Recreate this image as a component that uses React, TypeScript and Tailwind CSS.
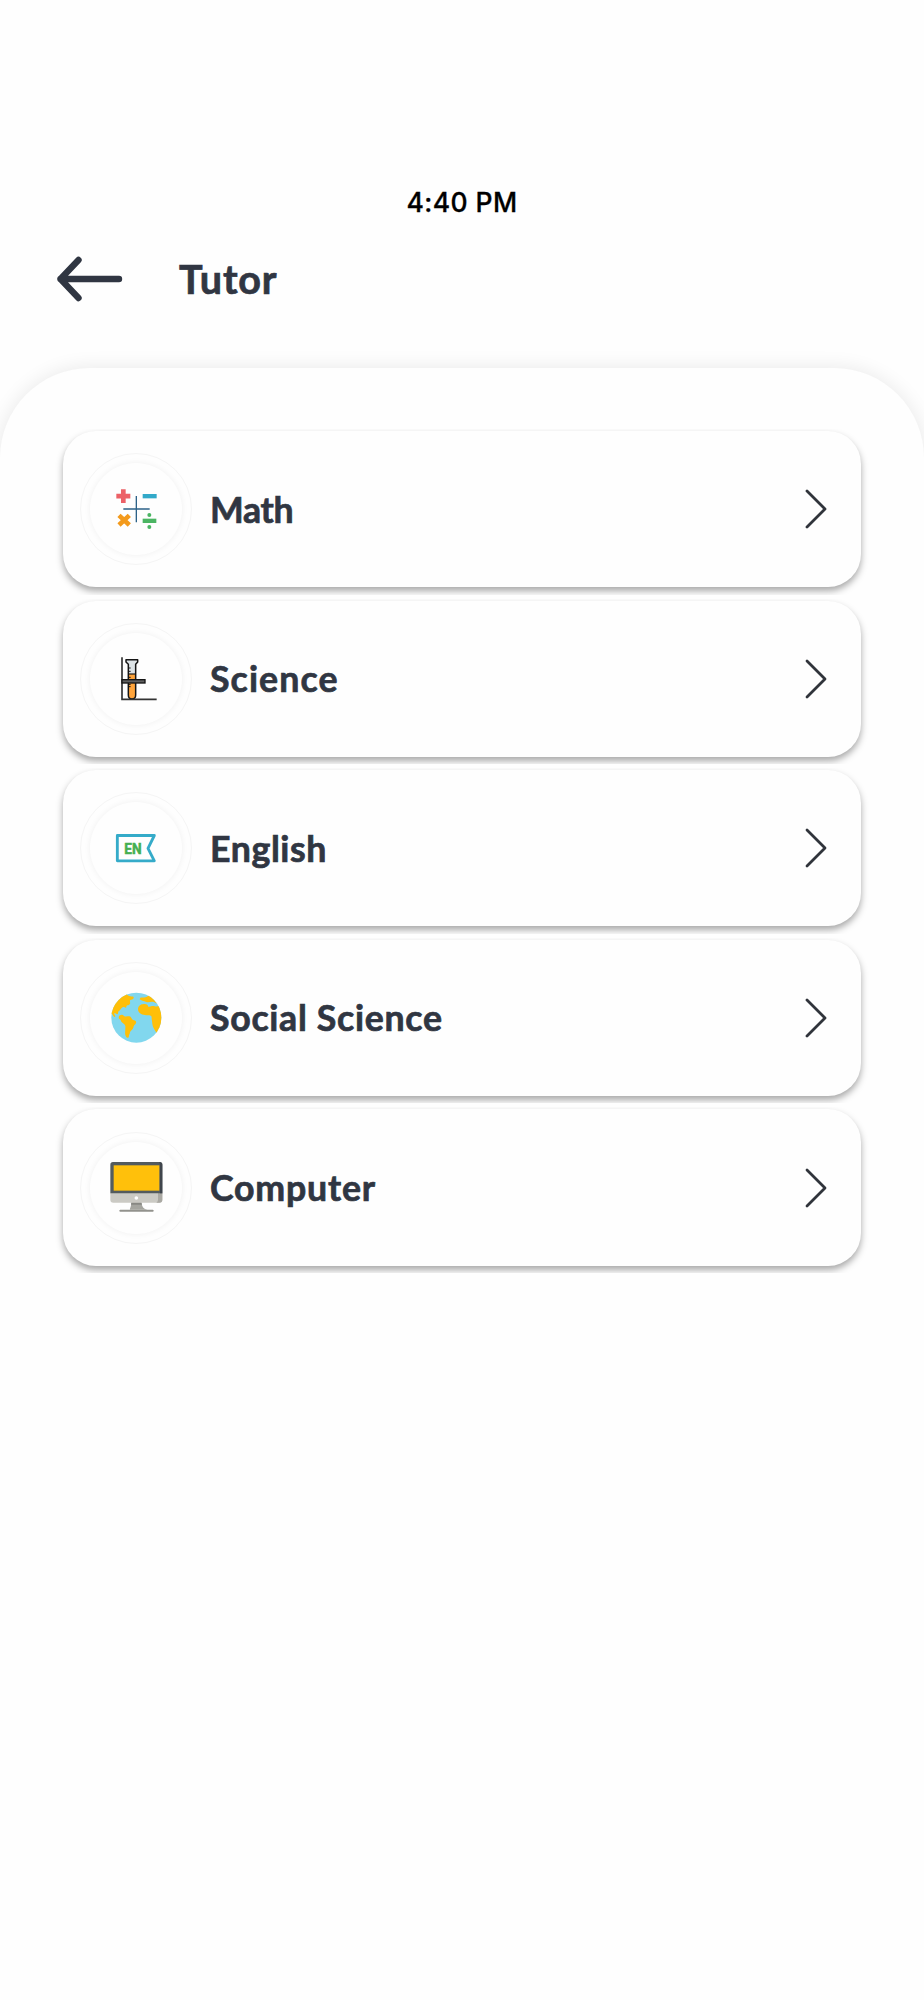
import React from 'react';

const MathIcon = () => (
  <svg viewBox="78 87 180 180" className="w-[60px] h-[60px]">
    <path d="M130 118v41M109 138.500h42" stroke="#ec6167" strokeWidth="14" />
    <path d="M188 138.500h42" stroke="#32a9c9" strokeWidth="13" />
    <path d="M169 138v79M130 177h79" stroke="#2d6288" strokeWidth="4" />
    <path d="M117 196l31 29M148 196l-31 29" stroke="#f39a1c" strokeWidth="14" />
    <path d="M188 212.500h41" stroke="#4bb563" strokeWidth="13" />
    <circle cx="208" cy="195" r="6" fill="#4bb563" />
    <circle cx="208" cy="231" r="6" fill="#4bb563" />
  </svg>
);

const ScienceIcon = () => (
  <svg viewBox="78 86 180 180" className="w-[60px] h-[60px]">
    <path d="M145 160h22v65q0 11-11 11t-11-11z" fill="#ffa43b" />
    <path d="M138 118h35v7l-6 7v28h-22v-28l-7-7z" fill="#dde3e6" />
    <path
      d="M138 118h35v7l-6 7v92q0 12-11 12t-11-12v-92l-7-7z"
      fill="none"
      stroke="#151515"
      strokeWidth="4.500"
      strokeLinejoin="round"
    />
    <path d="M146 161h21" stroke="#151515" strokeWidth="3.500" />
    <path d="M145 143h7M145 153h7M145 171h7M145 192h7M145 199h7" stroke="#151515" strokeWidth="3" />
    <path d="M126 111v126h104" fill="none" stroke="#333" strokeWidth="5" />
    <rect x="126" y="178" width="69" height="10" fill="#606060" stroke="#151515" strokeWidth="4" />
  </svg>
);

const EnglishIcon = () => (
  <svg viewBox="78 84 180 180" className="w-[60px] h-[60px]">
    <path
      d="M112 136.500h111l-19 38.500 19 37.500h-111z"
      fill="none"
      stroke="#35abc9"
      strokeWidth="8.500"
      strokeLinejoin="round"
    />
    <text
      x="133"
      y="191"
      fontSize="45"
      fontWeight="700"
      fill="#45af50"
      stroke="#45af50"
      strokeWidth="1.500"
      textLength="52"
      lengthAdjust="spacingAndGlyphs"
      fontFamily="Roboto, sans-serif"
    >
      EN
    </text>
  </svg>
);

const GlobeIcon = () => (
  <svg viewBox="78 84 180 180" className="w-[60px] h-[60px]">
    <defs>
      <clipPath id="globe">
        <circle cx="169" cy="173" r="75" />
      </clipPath>
    </defs>
    <g clipPath="url(#globe)">
      <rect x="90" y="95" width="160" height="160" fill="#81d7ee" />
      <g fill="#ffbf08">
        <path d="M136 95c3 8 8 13 14 14 6 1 12 0 11 5-1 5-8 4-11 7-1 4 2 8-1 12-3 5-6 2-9 4-2 2 1 5-3 6-4 0-4-3-9-1-5 2-5 7-10 10-6 3-2 8-5 10-4 2-6-4-9-3-5 4 4 7 1 12-4 0-6-4-8-8l-15-9 12-50z" />
        <path d="M117 168c6-4 11-5 15 0 4 3 9 1 16 1 6 1 6 8 11 11 6 2 11 2 9 9-2 5-5 5-7 10-1 7-4 10-8 13-5 4-2 7-5 11-2 4 0 7-3 10-5 2-7-3-9-8-2-8 1-19 0-27-2-6-9-9-13-14 1-5-4-5-7-10z" />
        <path d="M181 113c11-1 21 0 25-8l18 6 18 22c-8-1-12-3-19-6-8-4-16 2-24-1-8-2-16-5-20-8z" />
        <path d="M174 148c0-8 6-15 14-15 10-3 15 1 17 7 8 1 11-4 19-1 5 2 10-2 15-2l15 30-10 43-14 9c-5-8-12-17-13-27 0-8-3-15-2-22-4-7-12-3-20-5-11 0-21-7-21-17z" />
      </g>
    </g>
  </svg>
);

const ComputerIcon = () => (
  <svg viewBox="78 82 180 180" className="w-[60px] h-[60px]">
    <path d="M154 215h30c2 11 5 21 18 22h-52c-1-3 4-9 4-22z" fill="#a5a59f" />
    <path d="M154 215h30l2 7h-33z" fill="#888883" />
    <path d="M121 240h97" stroke="#92928d" strokeWidth="6" strokeLinecap="round" />
    <path d="M91 187h156v20q0 9-9 9H100q-9 0-9-9z" fill="#cbcac4" />
    <path d="M234 187h13v20q0 9-9 9h-9q5-3 5-9z" fill="#aaa9a3" />
    <path d="M91 188v-86q0-8 8-8h140q8 0 8 8v86z" fill="#535b5e" />
    <path d="M238 94q9 0 9 8v86h-7v-86z" fill="#3f454c" />
    <rect x="101" y="104" width="137" height="76" fill="#ffc00b" />
    <circle cx="169" cy="202" r="5.500" fill="#fff" />
  </svg>
);

const subjects = [
  { name: 'Math', icon: MathIcon, spacing: 'tracking-[-0.3px]' },
  { name: 'Science', icon: ScienceIcon, spacing: 'tracking-[1.1px]' },
  { name: 'English', icon: EnglishIcon, spacing: 'tracking-[0.6px]' },
  { name: 'Social Science', icon: GlobeIcon, spacing: 'tracking-[0.7px]' },
  { name: 'Computer', icon: ComputerIcon, spacing: 'tracking-[0.8px]' }
];

const App = () => {
  return (
    <div className="w-[924px] h-[2000px] bg-[#fefefe] overflow-hidden flex flex-col font-['Lato',sans-serif] text-[#303642]">
      <div className="h-[232px] pt-[186px] text-center font-['Inter',sans-serif] font-medium text-[26.5px] leading-[32px] tracking-[0.4px] text-black [-webkit-text-stroke:0.3px]">
        4:40 PM
      </div>

      <header className="h-[136px] shrink-0 pl-[56px] pt-[23px] flex items-start">
        <button aria-label="Back" className="w-[68px] h-12">
          <svg viewBox="0 0 68 48" className="w-[68px] h-12" fill="none" stroke="currentColor" strokeWidth="6.400" strokeLinecap="round" strokeLinejoin="round">
            <path d="M63 24H4.500M22.500 5L4.500 24l18 19" />
          </svg>
        </button>
        <h1 className="ml-[55px] text-[39.5px] leading-[48px] font-bold tracking-[0.8px] [-webkit-text-stroke:0.7px]">Tutor</h1>
      </header>

      <main className="grow rounded-t-[90px] bg-[#fefefe] shadow-[0_0_20px_rgba(0,0,0,0.09)] px-[52px] pt-[61px] flex flex-col gap-1">
        {subjects.map(({ name, icon: Icon, spacing }) => (
          <div key={name} className="h-[165.6px] shrink-0 overflow-hidden pl-[10.5px] pr-[11px] pt-[2px]">
            <button className="w-full h-[156.3px] rounded-[33px] bg-[#fefefe] shadow-[0_4px_7px_rgba(0,0,0,0.34)] flex items-center pl-[17.5px] pr-[34.5px] text-left">
              <span className="w-28 h-28 shrink-0 rounded-full border border-[#f5f5f5] flex items-center justify-center">
                <span className="w-[92px] h-[92px] rounded-full bg-[#fefefe] shadow-[0_0_6px_rgba(0,0,0,0.06)] flex items-center justify-center">
                  <Icon />
                </span>
              </span>
              <span className={`ml-[18px] pt-px grow text-[35.7px] leading-[44px] font-bold [-webkit-text-stroke:0.7px] ${spacing}`}>{name}</span>
              <svg viewBox="0 0 22 40" className="w-[22px] h-10" fill="none" stroke="#30343b" strokeWidth="2.800" strokeLinecap="round" strokeLinejoin="round">
                <path d="M2 2l18 18L2 38" />
              </svg>
            </button>
          </div>
        ))}
      </main>
    </div>
  );
};

export default App;
